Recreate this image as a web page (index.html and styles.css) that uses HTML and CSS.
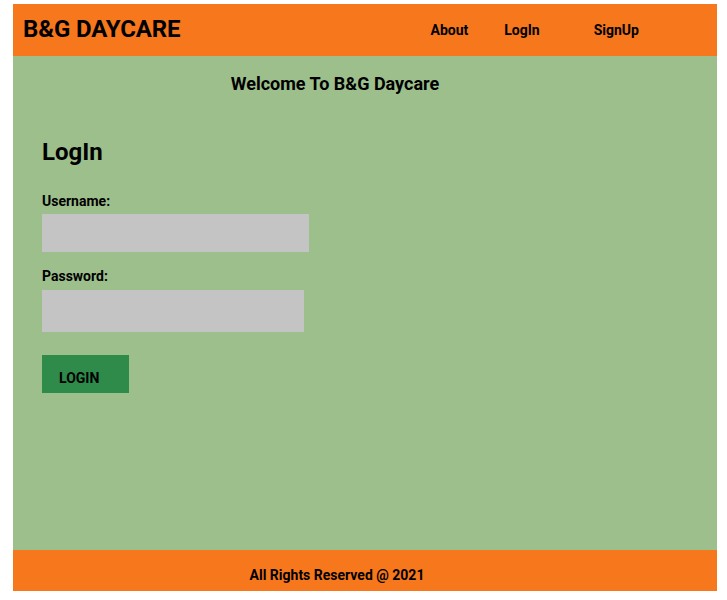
FILE: index.html
```html
<!DOCTYPE html>
<html>
<head>
<meta charset="utf-8">
<title>B&amp;G Daycare</title>
<link rel="stylesheet" href="styles.css">
</head>
<body>
<div class="page">
  <header class="header">
    <h1 class="brand">B&amp;G DAYCARE</h1>
    <nav class="nav">
      <a class="nav-link nav-about" href="#">About</a>
      <a class="nav-link nav-login" href="#">LogIn</a>
      <a class="nav-link nav-signup" href="#">SignUp</a>
    </nav>
  </header>
  <main class="main">
    <h2 class="welcome">Welcome To B&amp;G Daycare</h2>
    <form class="login-form">
      <h3 class="form-title">LogIn</h3>
      <label class="field-label label-user" for="username">Username:</label>
      <input class="field field-user" id="username" type="text">
      <label class="field-label label-pass" for="password">Password:</label>
      <input class="field field-pass" id="password" type="password">
      <button class="login-btn" type="button">LOGIN</button>
    </form>
  </main>
  <footer class="footer">
    <p class="footer-text">All Rights Reserved @ 2021</p>
  </footer>
</div>
</body>
</html>
```
FILE: styles.css
```css
html, body {
  margin: 0;
  padding: 0;
  background: #ffffff;
}
body {
  font-family: Roboto, "Liberation Sans", Arial, sans-serif;
  color: #000;
}
.page {
  margin: 4px 10px 0 13px;
  width: 704px;
}
.header {
  height: 52px;
  background: #f7771c;
  display: flex;
  align-items: center;
}
.brand {
  margin: 0 0 3px 10px;
  font-size: 24px;
  line-height: 28px;
  font-weight: 700;
  letter-spacing: -0.1px;
}
.nav {
  display: flex;
  margin-left: 250px;
  margin-bottom: 1px;
}
.nav-link {
  color: #000;
  text-decoration: none;
  font-size: 14px;
  font-weight: 700;
  line-height: 16px;
}
.nav-login { margin-left: 36px; }
.nav-signup { margin-left: 54px; }
.main {
  background: #9cbf8c;
  height: 494px;
  box-sizing: border-box;
  padding-top: 16px;
}
.welcome {
  margin: 0;
  padding-right: 60px;
  text-align: center;
  font-size: 18px;
  line-height: 24px;
  font-weight: 700;
}
.login-form {
  display: flex;
  flex-direction: column;
  align-items: flex-start;
  padding-left: 29px;
}
.form-title {
  margin: 42px 0 0;
  font-size: 24px;
  line-height: 29px;
  font-weight: 700;
}
.field-label {
  font-size: 14px;
  line-height: 16px;
  font-weight: 700;
}
.label-user { margin-top: 26px; }
.label-pass { margin-top: 16px; }
.field {
  border: none;
  background: #c4c4c4;
  padding: 0;
  margin: 0;
  outline: none;
}
.field-user {
  margin-top: 5px;
  width: 267px;
  height: 38px;
}
.field-pass {
  margin-top: 6px;
  width: 262px;
  height: 42px;
}
.login-btn {
  margin-top: 23px;
  width: 87px;
  height: 38px;
  box-sizing: border-box;
  border: none;
  background: #2e8b4a;
  color: #000;
  font-family: Roboto, "Liberation Sans", Arial, sans-serif;
  font-size: 14px;
  font-weight: 700;
  line-height: 16px;
  text-align: left;
  padding: 15px 0 7px 17px;
}
.footer {
  height: 41px;
  background: #f7771c;
  display: flex;
  align-items: center;
}
.footer-text {
  margin: 8px 0 0;
  width: 100%;
  padding-right: 56px;
  text-align: center;
  font-size: 14px;
  line-height: 16px;
  font-weight: 700;
}
```
